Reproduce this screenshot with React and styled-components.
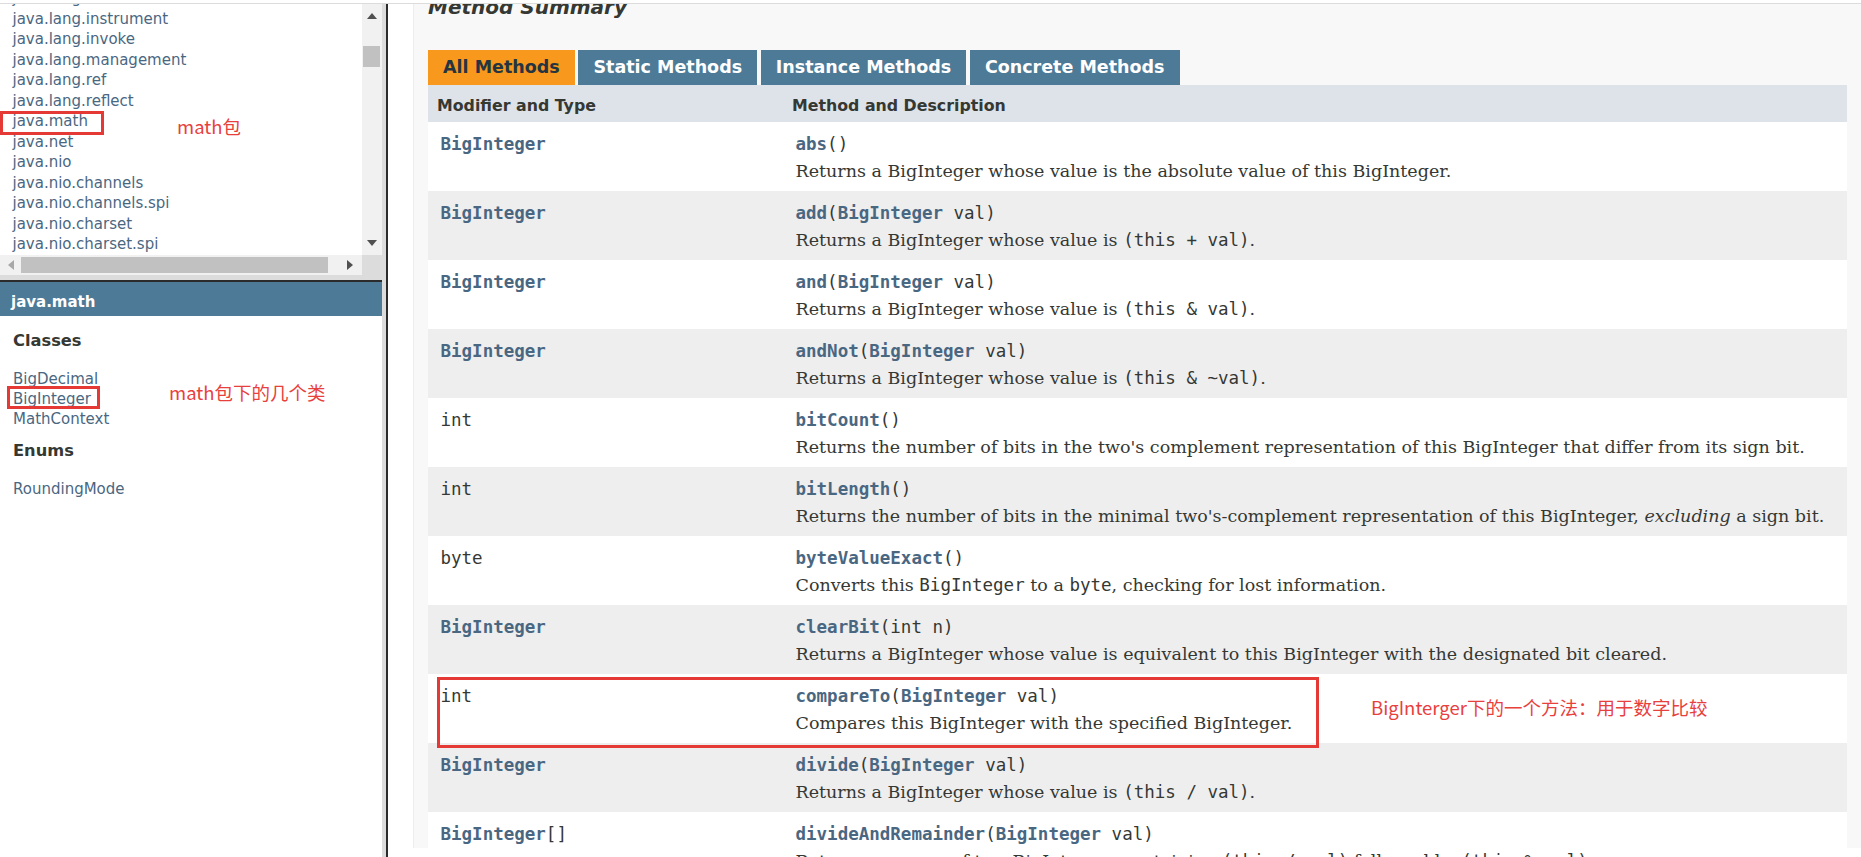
import React from "react";
import styled, { createGlobalStyle } from "styled-components";

const GlobalStyle = createGlobalStyle`
  html, body {
    margin: 0;
    padding: 0;
    background: #ffffff;
  }
  body {
    font-family: "DejaVu Sans", "Liberation Sans", Arial, sans-serif;
    color: #353833;
  }
`;

const packages = [
  "java.lang.annotation",
  "java.lang.instrument",
  "java.lang.invoke",
  "java.lang.management",
  "java.lang.ref",
  "java.lang.reflect",
  "java.math",
  "java.net",
  "java.nio",
  "java.nio.channels",
  "java.nio.channels.spi",
  "java.nio.charset",
  "java.nio.charset.spi",
];

const tabs = ["All Methods", "Static Methods", "Instance Methods", "Concrete Methods"];

function App() {
  return (
    <Page>
      <GlobalStyle />
      <TopRule />
      <Frames>
        <LeftColumn>
          <PackagesFrame>
            <PackagesBody>
              <PackageList>
                {packages.map((p) => (
                  <PackageItem key={p}>{p}</PackageItem>
                ))}
              </PackageList>
              <VScroll>
                <ArrowCell $h={23}>
                  <Arrow dir="up" />
                </ArrowCell>
                <VThumb />
                <Spacer />
                <ArrowCell $h={24}>
                  <Arrow dir="down" />
                </ArrowCell>
              </VScroll>
            </PackagesBody>
            <HScrollRow>
              <HScroll>
                <ArrowCell $w={21}>
                  <Arrow dir="left" muted />
                </ArrowCell>
                <HThumb />
                <Spacer />
                <ArrowCell $w={24}>
                  <Arrow dir="right" />
                </ArrowCell>
              </HScroll>
              <Corner />
            </HScrollRow>
          </PackagesFrame>
          <FrameSplit />
          <ClassesFrame>
            <Bar>java.math</Bar>
            <ClassesBody>
              <GroupTitle>Classes</GroupTitle>
              <ClassList>
                <ClassItem>BigDecimal</ClassItem>
                <ClassItem>BigInteger</ClassItem>
                <ClassItem>MathContext</ClassItem>
              </ClassList>
              <GroupTitle>Enums</GroupTitle>
              <ClassList>
                <ClassItem>RoundingMode</ClassItem>
              </ClassList>
            </ClassesBody>
          </ClassesFrame>
        </LeftColumn>
        <Divider />
        <RightFrame>
          <BlockList>
            <SummaryTitle>Method Summary</SummaryTitle>
            <Tabs>
              {tabs.map((t, i) => (
                <Tab key={t} $active={i === 0}>
                  {t}
                </Tab>
              ))}
            </Tabs>
            <MemberTable>
              <HeadRow>
                <HeadCell>Modifier and Type</HeadCell>
                <HeadCell>Method and Description</HeadCell>
              </HeadRow>
              {methods.map((m, i) => (
                <Row key={i} $alt={i % 2 === 1}>
                  <Cell>{m.type}</Cell>
                  <Cell>
                    <div>{m.sig}</div>
                    <Block>{m.desc}</Block>
                  </Cell>
                </Row>
              ))}
            </MemberTable>
          </BlockList>
        </RightFrame>
      </Frames>

      <MarkBox $x={0} $y={111} $w={104} $h={24} />
      <Note $x={177} $y={114}>math包</Note>
      <MarkBox $x={7} $y={386} $w={93} $h={23} />
      <Note $x={169} $y={380}>math包下的几个类</Note>
      <MarkBox $x={437} $y={677} $w={882} $h={71} />
      <Note $x={1371} $y={695}>BigInterger下的一个方法：用于数字比较</Note>
    </Page>
  );
}

function Arrow({ dir, muted }) {
  const pts = {
    up: "0,6 5,0 10,6",
    down: "0,0 10,0 5,6",
    left: "6,0 6,10 0,5",
    right: "0,0 0,10 6,5",
  }[dir];
  const vertical = dir === "up" || dir === "down";
  return (
    <svg
      width={vertical ? 10 : 6}
      height={vertical ? 6 : 10}
      viewBox={vertical ? "0 0 10 6" : "0 0 6 10"}
    >
      <polygon points={pts} fill={muted ? "#a8a8a8" : "#505050"} />
    </svg>
  );
}

const L = ({ children }) => <Code $link>{children}</Code>;
const C = ({ children }) => <Code>{children}</Code>;

const methods = [
  {
    type: <L>BigInteger</L>,
    sig: (
      <>
        <L>abs</L>
        <C>()</C>
      </>
    ),
    desc: "Returns a BigInteger whose value is the absolute value of this BigInteger.",
  },
  {
    type: <L>BigInteger</L>,
    sig: (
      <>
        <L>add</L>
        <C>(</C>
        <L>BigInteger</L>
        <C> val)</C>
      </>
    ),
    desc: (
      <>
        Returns a BigInteger whose value is <C>(this + val)</C>.
      </>
    ),
  },
  {
    type: <L>BigInteger</L>,
    sig: (
      <>
        <L>and</L>
        <C>(</C>
        <L>BigInteger</L>
        <C> val)</C>
      </>
    ),
    desc: (
      <>
        Returns a BigInteger whose value is <C>(this &amp; val)</C>.
      </>
    ),
  },
  {
    type: <L>BigInteger</L>,
    sig: (
      <>
        <L>andNot</L>
        <C>(</C>
        <L>BigInteger</L>
        <C> val)</C>
      </>
    ),
    desc: (
      <>
        Returns a BigInteger whose value is <C>(this &amp; ~val)</C>.
      </>
    ),
  },
  {
    type: <C>int</C>,
    sig: (
      <>
        <L>bitCount</L>
        <C>()</C>
      </>
    ),
    desc: "Returns the number of bits in the two's complement representation of this BigInteger that differ from its sign bit.",
  },
  {
    type: <C>int</C>,
    sig: (
      <>
        <L>bitLength</L>
        <C>()</C>
      </>
    ),
    desc: (
      <>
        Returns the number of bits in the minimal two's-complement representation of this BigInteger,{" "}
        <em>excluding</em> a sign bit.
      </>
    ),
  },
  {
    type: <C>byte</C>,
    sig: (
      <>
        <L>byteValueExact</L>
        <C>()</C>
      </>
    ),
    desc: (
      <>
        Converts this <C>BigInteger</C> to a <C>byte</C>, checking for lost information.
      </>
    ),
  },
  {
    type: <L>BigInteger</L>,
    sig: (
      <>
        <L>clearBit</L>
        <C>(int n)</C>
      </>
    ),
    desc: "Returns a BigInteger whose value is equivalent to this BigInteger with the designated bit cleared.",
  },
  {
    type: <C>int</C>,
    sig: (
      <>
        <L>compareTo</L>
        <C>(</C>
        <L>BigInteger</L>
        <C> val)</C>
      </>
    ),
    desc: "Compares this BigInteger with the specified BigInteger.",
  },
  {
    type: <L>BigInteger</L>,
    sig: (
      <>
        <L>divide</L>
        <C>(</C>
        <L>BigInteger</L>
        <C> val)</C>
      </>
    ),
    desc: (
      <>
        Returns a BigInteger whose value is <C>(this / val)</C>.
      </>
    ),
  },
  {
    type: (
      <>
        <L>BigInteger</L>
        <C>[]</C>
      </>
    ),
    sig: (
      <>
        <L>divideAndRemainder</L>
        <C>(</C>
        <L>BigInteger</L>
        <C> val)</C>
      </>
    ),
    desc: (
      <>
        Returns an array of two BigIntegers containing <C>(this / val)</C> followed by{" "}
        <C>(this % val)</C>.
      </>
    ),
  },
];

export default App;

const Page = styled.div`
  position: relative;
  height: 857px;
  padding-top: 3px;
  box-sizing: border-box;
  display: flex;
  flex-direction: column;
  overflow: hidden;
  background: #ffffff;
`;

const TopRule = styled.div`
  height: 1px;
  background: #dcdcdc;
  flex-shrink: 0;
`;

const Frames = styled.div`
  flex: 1;
  min-height: 0;
  display: flex;
`;

const LeftColumn = styled.div`
  width: 382px;
  flex-shrink: 0;
  display: flex;
  flex-direction: column;
`;

const PackagesFrame = styled.div`
  height: 271px;
  display: flex;
  flex-direction: column;
`;

const PackagesBody = styled.div`
  flex: 1;
  min-height: 0;
  display: flex;
`;

const PackageList = styled.ul`
  flex: 1;
  margin: 0;
  padding: 0 0 0 12.5px;
  list-style: none;
  overflow: hidden;
`;

const PackageItem = styled.li`
  font-size: 15px;
  line-height: 20.5px;
  color: #4a6782;
  white-space: nowrap;
  &:first-child {
    margin-top: -15.75px;
  }
`;

const VScroll = styled.div`
  width: 20px;
  background: #f1f1f1;
  display: flex;
  flex-direction: column;
`;

const ArrowCell = styled.div`
  flex-shrink: 0;
  ${(p) => (p.$h ? `height: ${p.$h}px;` : "")}
  ${(p) => (p.$w ? `width: ${p.$w}px;` : "")}
  display: flex;
  align-items: center;
  justify-content: center;
`;

const VThumb = styled.div`
  margin: 19px 2px 0 1px;
  height: 21px;
  background: #c1c1c1;
`;

const Spacer = styled.div`
  flex: 1;
`;

const HScrollRow = styled.div`
  height: 20px;
  display: flex;
`;

const HScroll = styled.div`
  flex: 1;
  background: #f1f1f1;
  display: flex;
`;

const HThumb = styled.div`
  width: 307px;
  margin: 2px 0;
  background: #c1c1c1;
`;

const Corner = styled.div`
  width: 20px;
  background: #dcdcdc;
`;

const FrameSplit = styled.div`
  height: 5px;
  background: #dcdcdc;
  border-bottom: 2px solid #2b2b2b;
`;

const ClassesFrame = styled.div`
  flex: 1;
  background: #ffffff;
`;

const Bar = styled.div`
  height: 34px;
  box-sizing: border-box;
  padding: 5px 0 0 11px;
  display: flex;
  align-items: center;
  background: #4d7a97;
  color: #ffffff;
  font-weight: bold;
  font-size: 15px;
`;

const ClassesBody = styled.div`
  padding: 15px 0 0 13px;
`;

const GroupTitle = styled.h2`
  margin: 0 0 17.5px;
  font-size: 16.25px;
  line-height: 20px;
  font-weight: bold;
  color: #353833;
`;

const ClassList = styled.ul`
  margin: 0 0 12px;
  padding: 0;
  list-style: none;
`;

const ClassItem = styled.li`
  font-size: 15px;
  line-height: 20.3px;
  color: #4a6782;
`;

const Divider = styled.div`
  width: 4px;
  flex-shrink: 0;
  background: #dcdcdc;
  border-right: 2px solid #2b2b2b;
`;

const RightFrame = styled.div`
  flex: 1;
  min-width: 0;
  padding-left: 25px;
  overflow: hidden;
  background: #ffffff;
`;

const BlockList = styled.div`
  height: 100%;
  padding-left: 14px;
  border-left: 1px solid #ededed;
  background: #f8f8f8;
`;

const SummaryTitle = styled.h3`
  margin: -9.4px 0 0;
  font-size: 20px;
  line-height: 24px;
  font-weight: bold;
  font-style: italic;
  color: #353833;
`;

const Tabs = styled.div`
  margin-top: 31.4px;
  display: flex;
`;

const Tab = styled.div`
  height: 35px;
  box-sizing: border-box;
  padding: 7px 15px 0;
  margin-right: 3.7px;
  font-size: 17.5px;
  line-height: 20px;
  font-weight: bold;
  white-space: nowrap;
  background: ${(p) => (p.$active ? "#f8981d" : "#4d7a97")};
  color: ${(p) => (p.$active ? "#253441" : "#ffffff")};
`;

const MemberTable = styled.div`
  width: 1419px;
`;

const HeadRow = styled.div`
  display: grid;
  grid-template-columns: 355px 1fr;
  height: 37px;
  background: #dee3e9;
`;

const HeadCell = styled.div`
  padding: 9px 4px 0 9px;
  font-size: 15.8px;
  line-height: 23px;
  font-weight: bold;
  color: #353833;
  white-space: nowrap;
`;

const Row = styled.div`
  display: grid;
  grid-template-columns: 355px 1fr;
  height: 69px;
  background: ${(p) => (p.$alt ? "#eeeeef" : "#ffffff")};
`;

const Cell = styled.div`
  padding: 10px 4px 0 12.5px;
  line-height: 24px;
  white-space: nowrap;
  overflow: hidden;
`;

const Code = styled.code`
  font-family: "DejaVu Sans Mono", "Liberation Mono", monospace;
  font-size: 17.5px;
  font-weight: ${(p) => (p.$link ? "bold" : "normal")};
  color: ${(p) => (p.$link ? "#4a6782" : "#353833")};
`;

const Block = styled.div`
  margin-top: 2.4px;
  font-family: "DejaVu Serif", Georgia, "Liberation Serif", serif;
  font-size: 17.5px;
  line-height: 24px;
  color: #353833;
  white-space: nowrap;
`;

const MarkBox = styled.div`
  position: absolute;
  left: ${(p) => p.$x}px;
  top: ${(p) => p.$y}px;
  width: ${(p) => p.$w}px;
  height: ${(p) => p.$h}px;
  box-sizing: border-box;
  border: 3px solid #e53935;
  pointer-events: none;
`;

const Note = styled.div`
  position: absolute;
  left: ${(p) => p.$x}px;
  top: ${(p) => p.$y}px;
  font-family: "Noto Sans CJK SC", "Noto Sans", sans-serif;
  font-size: 18.5px;
  line-height: 24px;
  color: #e8403d;
  white-space: nowrap;
`;
